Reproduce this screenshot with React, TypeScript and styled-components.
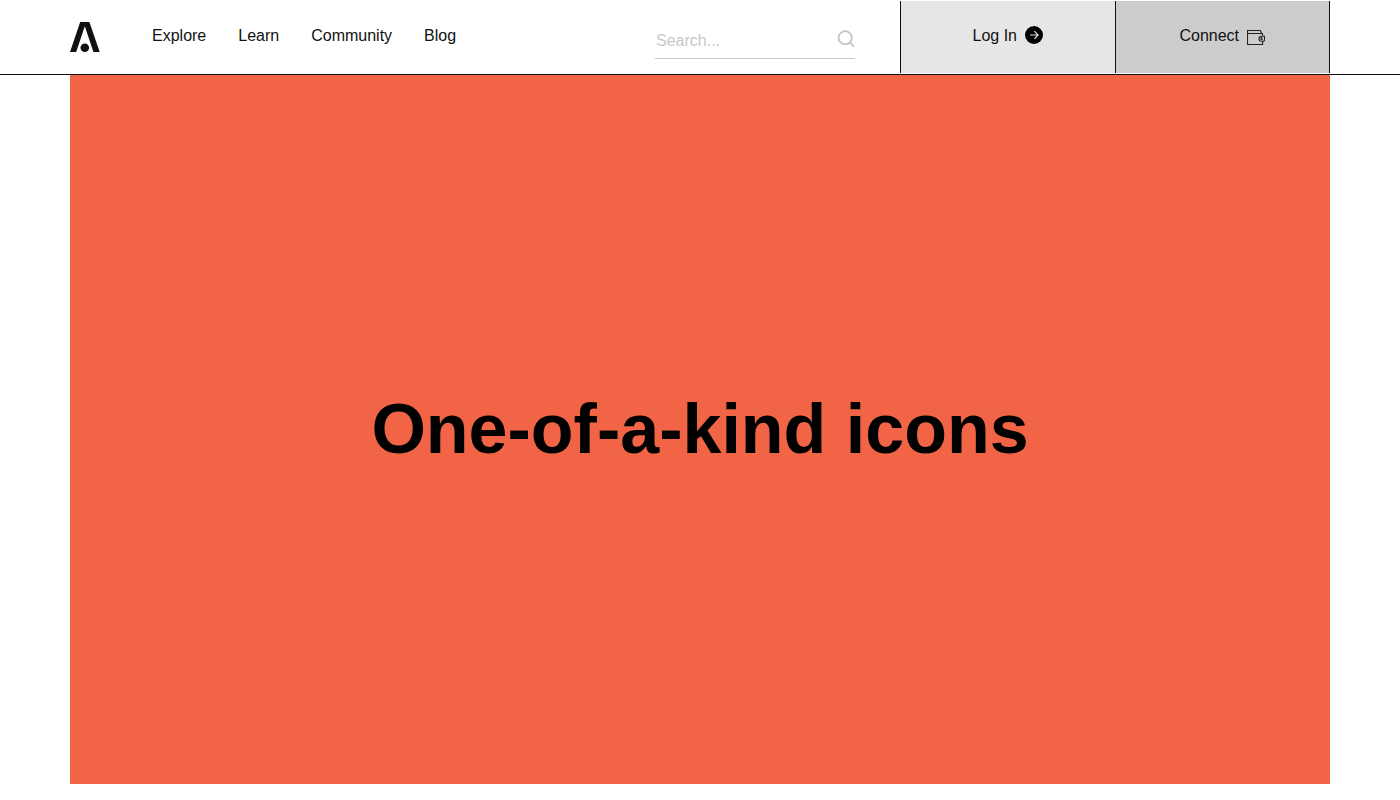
import React from "react";
import styled, { createGlobalStyle } from "styled-components";

const GlobalStyle = createGlobalStyle`
  *, *::before, *::after { box-sizing: border-box; }
  body {
    margin: 0;
    background: #fff;
    color: #111;
    font-family: "Liberation Sans", Arial, sans-serif;
    font-size: 16px;
    line-height: 24px;
  }
`;

const Header = styled.header`
  display: flex;
  align-items: stretch;
  height: 75px;
  padding: 0 5%;
  border-bottom: 1px solid #111;
`;

const HomeLink = styled.a`
  display: flex;
  align-items: center;
  margin-right: 52px;
  color: #111;
`;

const Nav = styled.nav`
  display: flex;
  gap: 32px;
  padding-top: 24px;
`;

const NavLink = styled.a`
  color: inherit;
  text-decoration: none;
`;

const Search = styled.form`
  display: flex;
  align-items: center;
  align-self: flex-start;
  width: 200px;
  height: 36px;
  margin: 23px 45px 0 auto;
  border-bottom: 1px solid #c8c8c8;
  color: #c4c4c4;
`;

const SearchInput = styled.input`
  flex: 1;
  min-width: 0;
  height: 34px;
  padding: 0 1px;
  border: 0;
  outline: 0;
  background: transparent;
  color: #111;
  font: inherit;
  &::placeholder {
    color: #c8c8c8;
    opacity: 1;
  }
`;

const SearchButton = styled.button`
  display: flex;
  padding: 0 0 4px;
  border: 0;
  background: none;
  color: inherit;
  cursor: pointer;
`;

const Actions = styled.div`
  display: flex;
  width: 430px;
  margin: 1px 0;
  border-right: 1px solid #111;
`;

const ActionButton = styled.button<{ $fill: string }>`
  display: flex;
  flex: 1;
  align-items: center;
  justify-content: center;
  gap: 8px;
  padding: 0 0 2px;
  border: 0;
  border-left: 1px solid #111;
  background: ${({ $fill }) => $fill};
  color: #111;
  font: inherit;
  cursor: pointer;
`;

const Hero = styled.main`
  display: flex;
  align-items: center;
  justify-content: center;
  margin: 0 5%;
  aspect-ratio: 16 / 9;
  background: #f16546;
`;

const Title = styled.h1`
  margin: 0;
  color: #000;
  font-size: 70px;
  font-weight: 700;
  line-height: 84px;
  text-align: center;
`;

const Logo = () => (
  <svg width="30" height="30" viewBox="0 0 30 30" fill="currentColor" aria-hidden="true">
    <path d="M10.2 0h9.2L29.7 30h-6.3L15 4.8h-.4L6.2 30H0z" />
    <circle cx="14.8" cy="25.7" r="4.3" />
  </svg>
);

const SearchIcon = () => (
  <svg width="18" height="18" viewBox="0 0 18 18" fill="none" stroke="currentColor" strokeWidth="1.8" aria-hidden="true">
    <circle cx="8.2" cy="7.8" r="6.6" />
    <path d="M13 12.6 17 16.6" />
  </svg>
);

const ArrowIcon = () => (
  <svg width="18" height="20" viewBox="0 0 18 20" fill="none" aria-hidden="true">
    <circle cx="9" cy="9" r="9" fill="#000" />
    <path d="M5 9h8M9.4 5.2 13.1 9l-3.7 3.8" stroke="#e6e6e6" strokeWidth="1.2" />
  </svg>
);

const WalletIcon = () => (
  <svg width="18" height="20" viewBox="0 0 18 20" fill="none" stroke="#222" strokeWidth="1.1" aria-hidden="true">
    <path d="M15.5 9.5v-2H.5v11h15.1v-3M.5 7.5v-3h13l1 3" />
    <path d="M17.5 10.2h-3a2.5 2.5 0 0 0 0 5h2.2l.8-1z" />
    <path d="M15.6 11.9h-1a.8.8 0 0 0 0 1.6h1" />
  </svg>
);

const links = ["Explore", "Learn", "Community", "Blog"];

export default function App() {
  return (
    <>
      <GlobalStyle />
      <Header>
        <HomeLink href="#" aria-label="Home">
          <Logo />
        </HomeLink>
        <Nav>
          {links.map((label) => (
            <NavLink key={label} href={`#${label.toLowerCase()}`}>
              {label}
            </NavLink>
          ))}
        </Nav>
        <Search role="search" onSubmit={(event) => event.preventDefault()}>
          <SearchInput type="text" placeholder="Search..." aria-label="Search" />
          <SearchButton type="submit" aria-label="Submit search">
            <SearchIcon />
          </SearchButton>
        </Search>
        <Actions>
          <ActionButton type="button" $fill="#e6e6e6">
            Log In
            <ArrowIcon />
          </ActionButton>
          <ActionButton type="button" $fill="#cccccc">
            Connect
            <WalletIcon />
          </ActionButton>
        </Actions>
      </Header>
      <Hero>
        <Title>One-of-a-kind icons</Title>
      </Hero>
    </>
  );
}
